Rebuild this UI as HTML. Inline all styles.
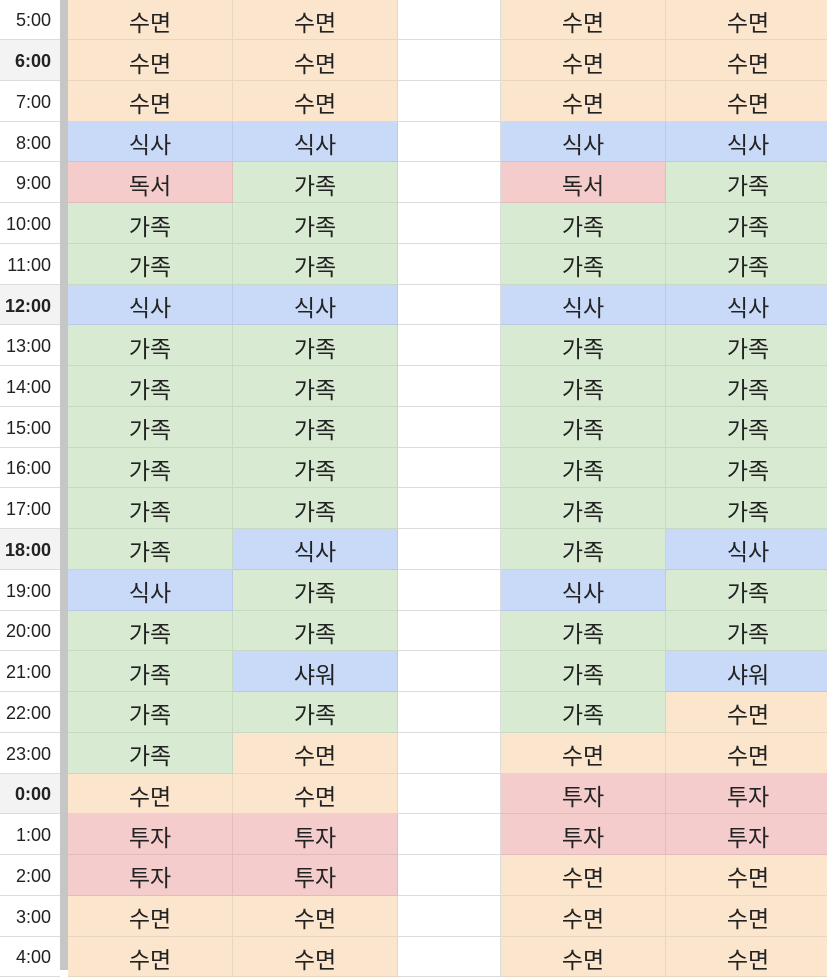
<!DOCTYPE html>
<html><head><meta charset="utf-8"><style>
body{margin:0;width:827px;height:970px;overflow:hidden;background:#fff;font-family:"Liberation Sans","Noto Sans CJK KR",sans-serif;position:relative}
.r{position:absolute;left:0;width:827px;height:40.74px}
.c{position:absolute;top:0;height:100%;box-sizing:border-box;display:flex;align-items:center;justify-content:center;font-size:23px;color:#222;border-bottom:1px solid #dcdcdc;border-right:1px solid #dcdcdc;padding-top:3px}
.t{left:0;width:60px;justify-content:flex-end;padding-right:9px;font-size:18px;color:#222;border-right:none;padding-top:3px}
.t.b{font-weight:bold;background:#f3f3f3}
.bar{position:absolute;left:60px;top:0;width:8px;height:970px;background:#c6c6c6}
.a{left:68px;width:165px}.bb{left:233px;width:165px}.e{left:398px;width:103px;background:#fff}.cc{left:501px;width:165px}.d{left:666px;width:165px}
.P{background:#fce5cd;border-color:#ead6c0}.B{background:#c9daf8;border-color:#b9c9e6}.G{background:#d9ead3;border-color:#c8d9c2}.R{background:#f4cccc;border-color:#e2bcbc}
</style></head><body>
<div class="bar"></div>
<div id="g"></div>
<script>
var d=[["5:00",0,"P수면","P수면","P수면","P수면"],["6:00",1,"P수면","P수면","P수면","P수면"],["7:00",0,"P수면","P수면","P수면","P수면"],["8:00",0,"B식사","B식사","B식사","B식사"],["9:00",0,"R독서","G가족","R독서","G가족"],["10:00",0,"G가족","G가족","G가족","G가족"],["11:00",0,"G가족","G가족","G가족","G가족"],["12:00",1,"B식사","B식사","B식사","B식사"],["13:00",0,"G가족","G가족","G가족","G가족"],["14:00",0,"G가족","G가족","G가족","G가족"],["15:00",0,"G가족","G가족","G가족","G가족"],["16:00",0,"G가족","G가족","G가족","G가족"],["17:00",0,"G가족","G가족","G가족","G가족"],["18:00",1,"G가족","B식사","G가족","B식사"],["19:00",0,"B식사","G가족","B식사","G가족"],["20:00",0,"G가족","G가족","G가족","G가족"],["21:00",0,"G가족","B샤워","G가족","B샤워"],["22:00",0,"G가족","G가족","G가족","P수면"],["23:00",0,"G가족","P수면","P수면","P수면"],["0:00",1,"P수면","P수면","R투자","R투자"],["1:00",0,"R투자","R투자","R투자","R투자"],["2:00",0,"R투자","R투자","P수면","P수면"],["3:00",0,"P수면","P수면","P수면","P수면"],["4:00",0,"P수면","P수면","P수면","P수면"]];
var h="",cl=["a","bb","cc","d"];
d.forEach(function(r,i){h+='<div class="r" style="top:'+(i*40.74-0.5)+'px"><div class="c t'+(r[1]?' b':'')+'">'+r[0]+'</div>';
for(var k=0;k<4;k++){if(k==2)h+='<div class="c e"></div>';var s=r[2+k];h+='<div class="c '+cl[k]+' '+s[0]+'">'+s.slice(1)+'</div>';}
h+='</div>';});
document.getElementById("g").innerHTML=h;
</script>
</body></html>
